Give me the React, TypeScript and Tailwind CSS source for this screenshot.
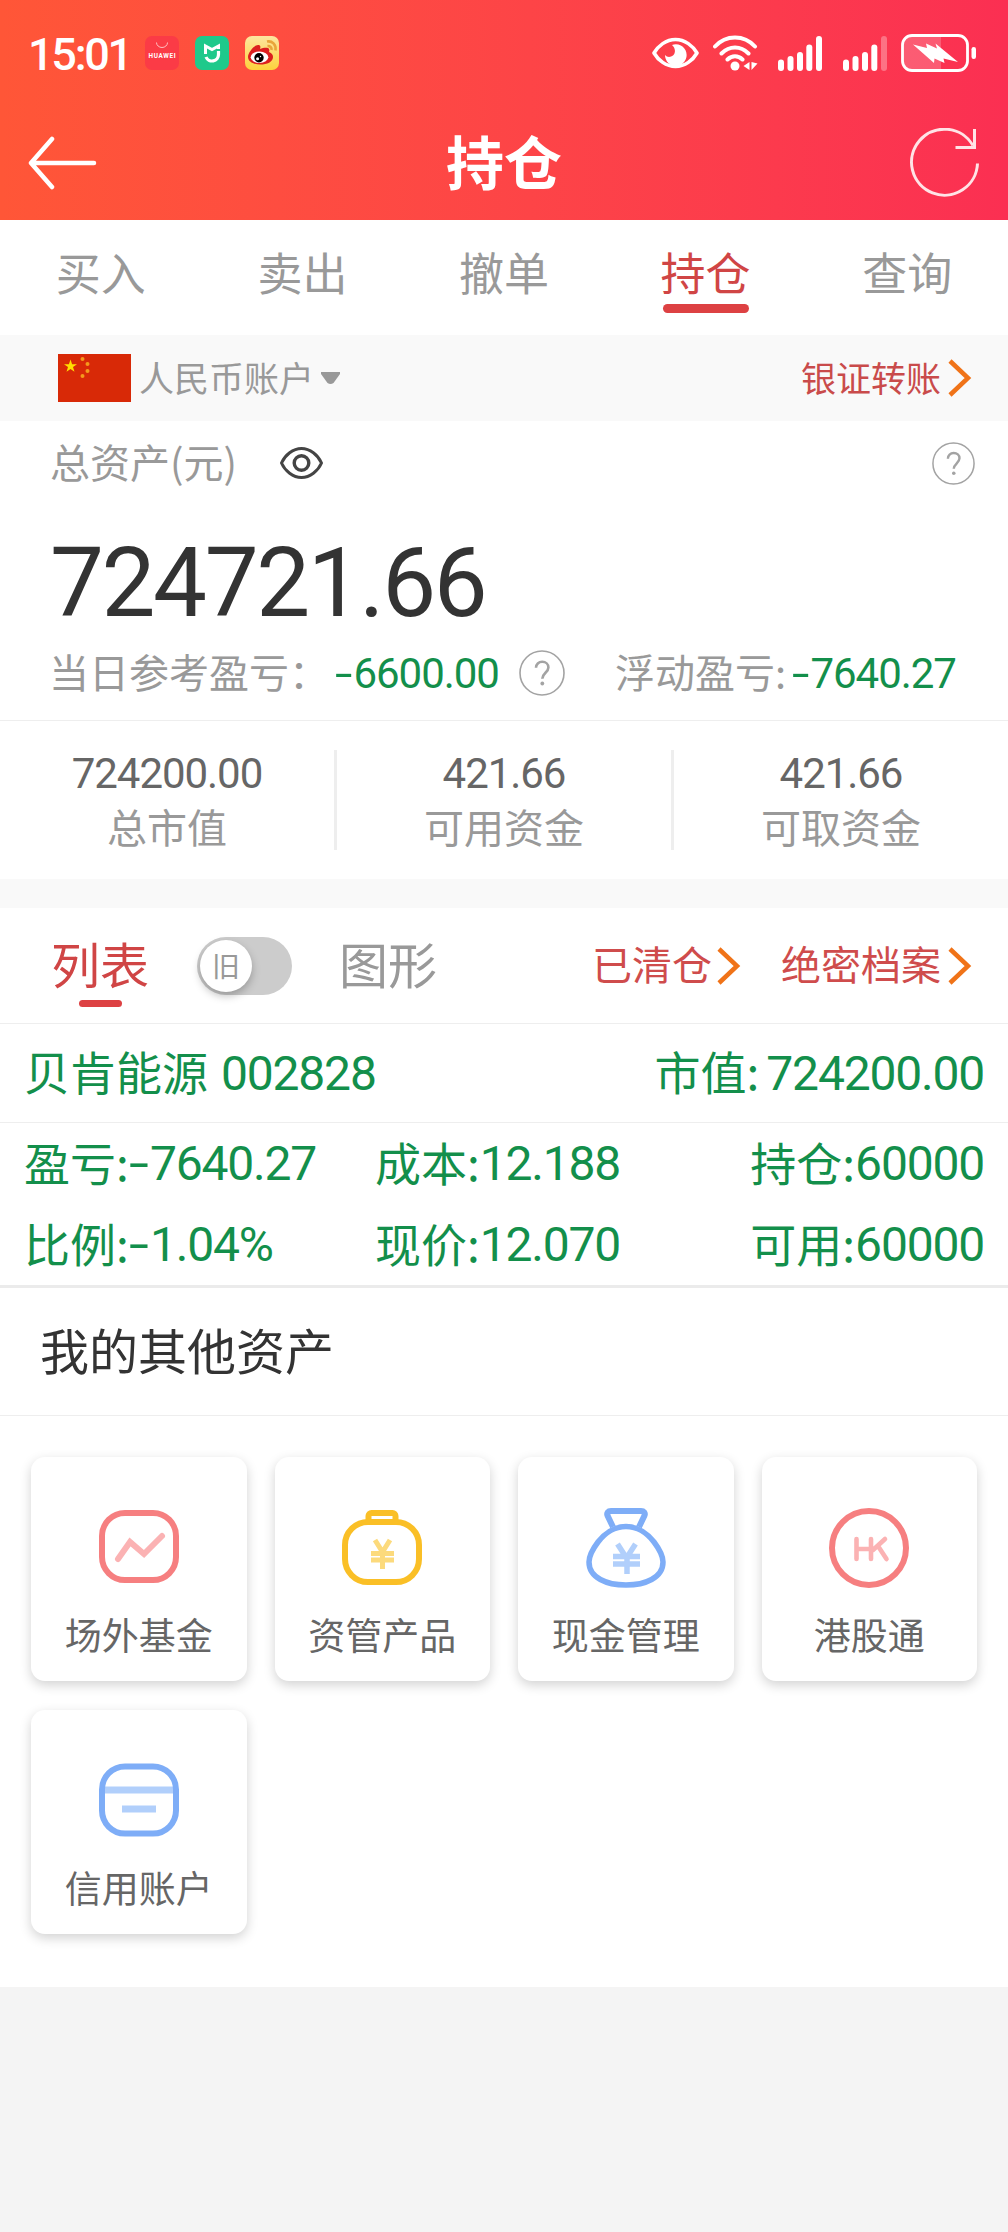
import React from 'react';
import clsx from 'clsx';

const tabs = ['买入', '卖出', '撤单', '持仓', '查询'];

const stats = [
  { value: '724200.00', label: '总市值' },
  { value: '421.66', label: '可用资金' },
  { value: '421.66', label: '可取资金' },
];

const details = [
  [
    { label: '盈亏', value: '-7640.27' },
    { label: '成本', value: '12.188' },
    { label: '持仓', value: '60000' },
  ],
  [
    { label: '比例', value: '-1.04%' },
    { label: '现价', value: '12.070' },
    { label: '可用', value: '60000' },
  ],
];

/* Digits are set in Roboto; the minus sign is widened to roughly a digit. */
const Num: React.FC<{ value: string; className?: string }> = ({ value, className }) => {
  const negative = value.startsWith('-');
  return (
    <span className={clsx("whitespace-nowrap pt-[0.04em] font-['Roboto','Noto_Sans_CJK_SC',sans-serif] tracking-[-0.025em]", className)}>
      {negative && <span className="inline-block w-[0.44em] origin-left scale-x-[1.5]">-</span>}
      {negative ? value.slice(1) : value}
    </span>
  );
};

/* CJK glyphs sit low in their line box, the bottom padding lifts them back to the middle. */
const Zh: React.FC<{ className?: string; children: React.ReactNode }> = ({ className, children }) => (
  <span className={clsx('inline-block whitespace-nowrap pb-[0.11em]', className)}>{children}</span>
);

const Chevron = () => (
  <svg className="h-[38px] w-[24px]" viewBox="0 0 24 38" fill="none" stroke="#f07318" strokeWidth="4.500">
    <path d="M2 2 20 19 2 36" strokeLinejoin="miter" />
  </svg>
);

const Help: React.FC<{ className: string }> = ({ className }) => (
  <svg className={className} viewBox="0 0 46 46" fill="none" stroke="#a3a3a3">
    <circle cx="23" cy="23" r="22" strokeWidth="1.600" />
    <path d="M17 17.800c0-3.600 2.700-6 6.200-6s6.200 2.300 6.200 5.700c0 4.900-6.100 5.700-6.100 11.200" strokeWidth="2.600" />
    <circle cx="23.300" cy="33.500" r="1.900" fill="#a3a3a3" stroke="none" />
  </svg>
);

const Signal: React.FC<{ weak?: boolean }> = ({ weak }) => (
  <svg className="h-[35px] w-[44px]" viewBox="0 0 44 35" fill="#fff">
    <rect x="0" y="23.500" width="6" height="11.500" rx="3" />
    <rect x="9.500" y="20" width="6" height="15" rx="3" />
    <rect x="19" y="16" width="6" height="19" rx="3" />
    <rect x="28.300" y="8.500" width="6" height="26.500" rx="3" />
    <rect x="38" y="0" width="6" height="35" rx="3" opacity={weak ? 0.3 : 1} />
  </svg>
);

const StatusBar = () => (
  <div className="flex h-[106px] items-center pl-[28px] pr-[31px]">
    <span className="w-[103px] whitespace-nowrap pt-[2px] font-['Roboto',sans-serif] text-[45px] font-medium leading-none tracking-[-0.05em]">15:01</span>
    <div className="ml-[14px] flex gap-4">
      <svg className="size-[34px]" viewBox="0 0 34 34">
        <rect width="34" height="34" rx="7" fill="#fb3b46" />
        <path d="M11.500 6.500a5.500 5 0 0 0 11 0" fill="none" stroke="#ffc0c0" strokeWidth="1" />
        <text x="17" y="22.200" textAnchor="middle" fontFamily="Roboto, sans-serif" fontWeight="700" fontSize="6.400" fill="#fff" textLength="27">HUAWEI</text>
      </svg>
      <svg className="size-[34px]" viewBox="0 0 34 34">
        <rect width="34" height="34" rx="7" fill="#1fc98b" />
        <path d="M10.500 18V10l6.500 3.500 6.500-3.500v3" fill="none" stroke="#fff" strokeWidth="3" />
        <path d="M23.500 15v3.500a6.500 6.500 0 0 1-12.500 2.500" fill="none" stroke="#fff" strokeWidth="3.200" />
      </svg>
      <svg className="size-[34px]" viewBox="0 0 34 34">
        <defs>
          <linearGradient id="weibo" x1="0" y1="0" x2="0" y2="1">
            <stop stopColor="#fde6a0" />
            <stop offset="1" stopColor="#fdd23c" />
          </linearGradient>
        </defs>
        <rect width="34" height="34" rx="7" fill="url(#weibo)" />
        <path d="M3 21c0-4 6-12 10-12 2 0 3 1 2 4 3-1 8-2 9 0 .6 1 .3 2 0 3 3 1 4 3 4 5 0 5-6 7.500-12.500 7.500S3 26 3 21z" fill="#dc1f1f" />
        <ellipse cx="14.500" cy="21.300" rx="8.800" ry="5.700" fill="#fff" />
        <circle cx="14" cy="21.700" r="4.700" fill="#000" />
        <circle cx="12.600" cy="22.800" r="1.500" fill="#fff" />
        <circle cx="15.500" cy="20.500" r=".7" fill="#fff" />
        <path d="M22 5.500c5-1 9.500 3 8.500 9M22.500 10c2.500-.3 4.500 1.500 4 4" fill="none" stroke="#e9a53a" strokeWidth="2.600" />
      </svg>
    </div>
    <div className="ml-auto flex items-center">
      <svg className="h-[32px] w-[47px]" viewBox="0 0 47 32" fill="none">
        <path d="M2 16C6 9 14 2.500 23.500 2.500S41 9 45 16C41 23 33 29.500 23.500 29.500S6 23 2 16z" stroke="#fff" strokeWidth="3.600" strokeLinejoin="round" />
        <path d="M20 8a10.800 10.800 0 1 1-7 10c2 2.500 5.500 2.500 8 .5 3-2.500 2.500-7.500-1-10.500z" fill="#fff" />
      </svg>
      <svg className="ml-[14px] h-[36px] w-[45px]" viewBox="0 0 45 36" fill="none" stroke="#fff" strokeWidth="4" strokeLinecap="round">
        <path d="M2 11.500c11-12 29-12 40 0M8.500 18.500c8-8 19-8 27 0M14.500 24.500c4.500-4.300 10.500-4.300 15 0" />
        <circle cx="22" cy="31" r="4.500" fill="#fff" stroke="none" />
        <path d="M36.500 27v8l-6-4zM38.500 27v8l6-6.500z" fill="#fff" stroke="none" />
      </svg>
      <div className="ml-[20px]"><Signal /></div>
      <div className="ml-[21px]"><Signal weak /></div>
      <svg className="ml-[14px] h-[38px] w-[76px]" viewBox="0 0 76 38">
        <path d="M10 2h30v34H10a8 8 0 0 1-8-8V10a8 8 0 0 1 8-8z" fill="#fff" opacity=".2" />
        <rect x="1.500" y="1.500" width="65" height="35" rx="9.500" fill="none" stroke="#fff" strokeWidth="2.800" />
        <path d="M12 10.500 26 14 25 9.500 36 14.500 34.500 9.500 57 28 42.500 24.500 43.500 29 33.500 24.500 33 29z" fill="#fff" />
        <rect x="70.500" y="13" width="4.500" height="12" rx="2.200" fill="#fff" />
      </svg>
    </div>
  </div>
);

const NavBar = () => (
  <div className="flex h-[114px] items-center justify-between px-[28px]">
    <svg className="h-[54px] w-[70px]" viewBox="0 0 70 54" fill="none" stroke="#fff" strokeWidth="4.500" strokeLinecap="round" strokeLinejoin="round">
      <path d="M24 3 3 27l21 24M3 27h63" />
    </svg>
    <h1 className="pb-[6px] text-[58px] font-bold leading-none">持仓</h1>
    <svg className="h-[70px] w-[70px]" viewBox="0 0 70 70" fill="none" stroke="#ffe3e6" strokeWidth="3">
      <path d="M67.500 35.500a33 33 0 1 1-4.500-18" />
      <path d="M64.500 1v18.500H45.500" />
    </svg>
  </div>
);

const stroke = { fill: 'none', strokeWidth: 6 };

const FundIcon = () => (
  <svg className="size-20" viewBox="0 0 80 80" {...stroke}>
    <rect x="3" y="5" width="74" height="67" rx="23" stroke="#f67f80" />
    <path d="m19 51 12-17 14 12 18-18" stroke="#fbb2b3" strokeLinecap="round" />
  </svg>
);

const ProductIcon = () => (
  <svg className="size-20" viewBox="0 0 80 80" {...stroke}>
    <path d="M26.500 15V8a3 3 0 0 1 3-3h21a3 3 0 0 1 3 3v7" stroke="#fabf26" />
    <rect x="3" y="14" width="74" height="60" rx="23" stroke="#fabf26" />
    <path d="m33 32 7.500 12 7.500-12M29 45.500h23M29 52h23M40.500 44v17" stroke="#fcda7c" strokeWidth="5" />
  </svg>
);

const CashIcon = () => (
  <svg className="size-20" viewBox="0 0 80 80" {...stroke}>
    <path d="m27 19-5.500-11.500C20.500 5 22 3 25 3h30c3 0 4.500 2 3.500 4.500L53 19" stroke="#7eadf7" />
    <path d="M40 18.500C28 18.500 18 26 12 34 6 42 3 48 3 54c0 16 18 23 37 23s37-7 37-23c0-6-3-12-9-20-6-8-16-15.500-28-15.500z" stroke="#7eadf7" strokeWidth="5.500" />
    <path d="m31.500 36 9 14 9-14M27 48.500h27M27 56h27M41 48v18" stroke="#b1cffb" strokeWidth="5.500" />
  </svg>
);

const HkIcon = () => (
  <svg className="size-20" viewBox="0 0 80 80" {...stroke}>
    <circle cx="40" cy="40" r="37" stroke="#f67f80" />
    <path d="M27.500 31v20M27.500 41h14M42 31v20M56 31 44 42M49 38l8.500 13" stroke="#fbb2b3" strokeWidth="4.600" strokeLinecap="round" />
  </svg>
);

const CreditIcon = () => (
  <svg className="size-20" viewBox="0 0 80 80" {...stroke}>
    <path d="M5 29h70M23 48h34" stroke="#b1cffb" strokeWidth="7" />
    <rect x="3" y="5.500" width="74" height="67" rx="23" stroke="#7eadf7" />
  </svg>
);

const assets = [
  { icon: FundIcon, label: '场外基金' },
  { icon: ProductIcon, label: '资管产品' },
  { icon: CashIcon, label: '现金管理' },
  { icon: HkIcon, label: '港股通' },
  { icon: CreditIcon, label: '信用账户' },
];

export default function App() {
  return (
    <div className="flex h-[2232px] w-[1008px] flex-col overflow-hidden bg-[#f4f4f4] font-['Noto_Sans_CJK_SC',sans-serif] leading-none text-[#999]">
      <header className="h-[220px] shrink-0 bg-linear-to-r from-[#ff5637] to-[#fb2f52] text-white">
        <StatusBar />
        <NavBar />
      </header>

      {/* Trade tabs */}
      <nav className="grid h-[115px] shrink-0 grid-cols-5 bg-white text-[45px]">
        {tabs.map((tab) => (
          <div key={tab} className={clsx('flex flex-col items-center pt-[29px]', tab === '持仓' && 'text-[#d04545]')}>
            <span>{tab}</span>
            {tab === '持仓' && <span className="mt-[10px] h-[9px] w-[86px] rounded-full bg-[#dd4143]" />}
          </div>
        ))}
      </nav>

      {/* Account selector */}
      <div className="flex h-[86px] shrink-0 items-center bg-[#f9f9f9] pl-[58px] pr-[36px] text-[35px]">
        <svg className="h-[48px] w-[73px]" viewBox="0 0 73 48">
          <rect width="73" height="48" fill="#d82907" />
          <path d="m12.500 5.500 1.600 4.700h4.900l-4 2.900 1.500 4.700-4-2.900-4 2.900 1.500-4.700-4-2.900h4.900z" fill="#ffde00" />
          <g fill="#f59a1c">
            <circle cx="24.500" cy="5" r="2" />
            <circle cx="29.500" cy="10" r="2" />
            <circle cx="29.500" cy="17" r="2" />
            <circle cx="24.500" cy="22" r="2" />
          </g>
        </svg>
        <Zh className="ml-[8px]">人民币账户</Zh>
        <svg className="ml-[7px] h-[12px] w-[19px]" viewBox="0 0 19 12" fill="#999">
          <path d="M0 0h19v2l-6.500 9q-3 2-6 0L0 2z" />
        </svg>
        <Zh className="ml-auto mr-[7px] text-[#c94b4b]">银证转账</Zh>
        <Chevron />
      </div>

      {/* Asset summary */}
      <section className="h-[458px] shrink-0 bg-white">
        <div className="flex h-[84px] items-center pl-[50px] pr-[33px] text-[40px]">
          <Zh className="w-[230px]">总资产(元)</Zh>
          <svg className="h-[32px] w-[43px]" viewBox="0 0 43 32" fill="none" stroke="#444" strokeWidth="3">
            <path d="M1.500 16C5 8 13 1.500 21.500 1.500S38 8 41.500 16C38 24 30 30.500 21.500 30.500S5 24 1.500 16z" />
            <circle cx="21.500" cy="16" r="7.300" strokeWidth="3.400" />
          </svg>
          <Help className="ml-auto size-[43px]" />
        </div>
        <div className="flex h-[137px] items-center pl-[50px] pt-[16px] text-[#333]">
          <Num value="724721.66" className="text-[96px] leading-none" />
        </div>
        <div className="mb-[16px] flex h-[62px] items-center pl-[49px] text-[40px]">
          <Zh className="w-[286px]">当日参考盈亏：</Zh>
          <Num value="-6600.00" className="w-[184px] text-[42px] text-[#138f4b]" />
          <Help className="size-[46px]" />
          <Zh className="ml-[50px] w-[177px]">浮动盈亏:</Zh>
          <Num value="-7640.27" className="text-[42px] text-[#138f4b]" />
        </div>
        <div className="flex h-[159px] items-center border-t border-[#eee]">
          {stats.map((item, i) => (
            <div key={item.label} className={clsx('flex h-[100px] flex-1 flex-col items-center', i > 0 && 'border-l-[3px] border-[#eee]')}>
              <Num value={item.value} className="text-[42px] leading-[44px] text-[#666]" />
              <Zh className="mt-[10px] text-[40px]">{item.label}</Zh>
            </div>
          ))}
        </div>
      </section>

      <div className="h-[29px] shrink-0 bg-[#f9f9f9]" />

      {/* List / chart switch */}
      <div className="flex h-[116px] shrink-0 items-center border-b border-[#eee] bg-white pl-[51px] pr-[36px]">
        <div className="relative text-[49px] text-[#d04545]">
          <Zh>列表</Zh>
          <span className="absolute -bottom-[14px] left-[28px] h-[7px] w-[43px] rounded-full bg-[#dd4143]" />
        </div>
        <div className="ml-[48px] flex h-[58px] w-[95px] items-center rounded-full bg-[#ccc] pl-[3px]">
          <span className="flex size-[52px] items-center justify-center rounded-full bg-white pb-[2px] text-[28px] shadow-[0_4px_8px_rgba(0,0,0,0.25)]">旧</span>
        </div>
        <Zh className="ml-[47px] text-[49px]">图形</Zh>
        <Zh className="ml-auto mr-[5px] text-[40px] text-[#cf4c4c]">已清仓</Zh>
        <Chevron />
        <Zh className="ml-[40px] mr-[7px] text-[40px] text-[#cf4c4c]">绝密档案</Zh>
        <Chevron />
      </div>

      {/* Holding */}
      <section className="h-[264px] shrink-0 border-b-[3px] border-[#ebebeb] bg-white text-[46px] text-[#138f4b]">
        <div className="flex h-[99px] items-center justify-between border-b border-[#eee] px-[24px]">
          <div className="flex items-center">
            <Zh>贝肯能源</Zh>
            <Num value="002828" className="ml-[13px] text-[48px]" />
          </div>
          <div className="flex items-center">
            <Zh>市值:</Zh>
            <Num value="724200.00" className="ml-[7px] text-[48px]" />
          </div>
        </div>
        {details.map((row) => (
          <div key={row[0].label} className="flex h-[81px] items-center px-[24px]">
            {row.map((item, i) => (
              <div key={item.label} className={clsx('flex items-center', i === 0 && 'w-[351px]', i === 2 && 'ml-auto')}>
                <Zh>{item.label}:</Zh>
                <Num value={item.value} className="text-[48px]" />
              </div>
            ))}
          </div>
        ))}
      </section>

      {/* Other assets */}
      <section className="h-[699px] shrink-0 bg-white">
        <h2 className="flex h-[128px] items-center border-b border-[#eee] pl-[40px] text-[49px] text-[#333]">
          <Zh>我的其他资产</Zh>
        </h2>
        <div className="grid grid-cols-4 gap-x-[28px] gap-y-[29px] px-[31px] pt-[41px]">
          {assets.map((asset) => (
            <div key={asset.label} className="flex h-[224px] flex-col items-center rounded-[14px] bg-white pt-[51px] text-[37px] text-[#666] shadow-[0_4px_12px_rgba(0,0,0,0.18)]">
              <asset.icon />
              <Zh className="mt-[28px]">{asset.label}</Zh>
            </div>
          ))}
        </div>
      </section>
    </div>
  );
}
